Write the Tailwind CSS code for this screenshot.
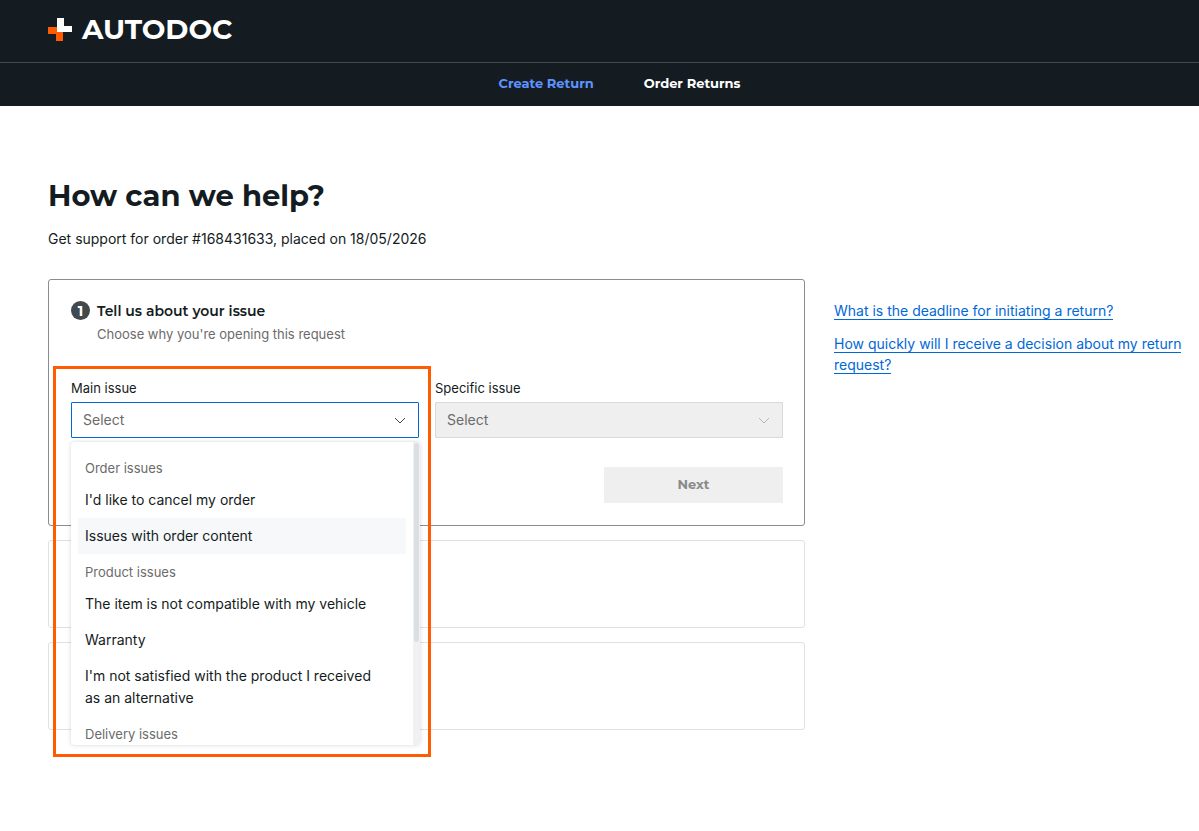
<!DOCTYPE html>
<html lang="en">
    <head>
        <meta charset="UTF-8" />
        <title>Create Return</title>
        <meta name="viewport" content="width=device-width, initial-scale=1.0" />
        <script src="https://cdn.jsdelivr.net/npm/@tailwindcss/browser@4"></script>
    </head>
    <body class="min-h-screen bg-white font-['Inter',sans-serif] text-sm text-[#141c22]">
        <!-- Header -->
        <header class="bg-[#141c22] text-white">
            <div class="flex h-[63px] items-center border-b border-[#464b4d] px-12 pb-[3px]">
                <a href="#" class="flex items-center gap-2.5 font-['Montserrat','Inter',sans-serif] text-[28px] leading-8 font-bold">
                    <svg class="h-6 w-6" viewBox="0 0 24 24" aria-hidden="true">
                        <path fill="#ff5b00" d="M0 9h9v5h6v9H8v-7H0z" />
                        <path fill="#fff" d="M9 0h7v8h8v6H9z" />
                    </svg>
                    <span class="pb-0.5">AUTODOC</span>
                </a>
            </div>
            <nav class="flex h-[43px] items-center justify-center gap-[50px] pb-0.5 pl-10 font-['Montserrat','Inter',sans-serif] text-[13px] font-bold">
                <a href="#" class="text-[#5e93ff]">Create Return</a>
                <a href="#">Order Returns</a>
            </nav>
        </header>

        <main class="pt-[70px] pb-12 pl-12">
            <h1 class="font-['Montserrat','Inter',sans-serif] text-[29px] leading-10 font-bold">How can we help?</h1>
            <p class="mt-3 leading-[22px]">Get support for order #168431633, placed on 18/05/2026</p>

            <div class="mt-[29px] grid grid-cols-[757fr_365fr] gap-[29px]">
                <div class="space-y-3.5">
                    <!-- Step 1 -->
                    <form class="rounded-[3px] border border-[#8a8d8f] pt-5 pr-[21px] pb-[22px] pl-[22px]">
                        <div class="flex items-start gap-[7px]">
                            <span class="mt-px flex size-[19px] items-center justify-center rounded-full bg-[#42494d] font-['Montserrat','Inter',sans-serif] text-sm leading-4 font-bold text-white">1</span>
                            <div>
                                <h2 class="font-['Montserrat','Inter',sans-serif] text-sm leading-[22px] font-semibold">Tell us about your issue</h2>
                                <p class="mt-0.5 text-[13px] leading-5 text-[#6b6b6b]">Choose why you're opening this request</p>
                            </div>
                        </div>

                        <div class="mt-[34px] grid grid-cols-2 gap-4">
                            <div class="relative">
                                <label for="mainIssue" class="block text-[13px] leading-5">Main issue</label>
                                <div class="relative mt-1">
                                    <select id="mainIssue" class="h-9 w-full appearance-none rounded-[1px] border border-[#0068d7] bg-white px-[11px] text-[#6b6b6b]">
                                        <option>Select</option>
                                    </select>
                                    <svg class="pointer-events-none absolute top-3 right-[13px] size-3" viewBox="0 0 12 12" fill="none" stroke="#42494d" aria-hidden="true">
                                        <path d="M1 4l5 5 5-5" />
                                    </svg>
                                </div>

                                <!-- Open option list -->
                                <div class="absolute top-16 -right-px left-0 z-10 flex h-[303px] overflow-hidden rounded bg-white shadow-[0_0_4px_rgba(20,28,34,0.18)]">
                                    <ul class="flex-1 px-[7px] py-2 leading-[22px]">
                                        <li class="px-[7px] pt-2 pb-1 text-[13px] leading-5 text-[#6b6b6b]">Order issues</li>
                                        <li><button type="button" class="w-full py-[7px] pr-6 pl-[7px] text-left">I'd like to cancel my order</button></li>
                                        <li><button type="button" class="w-full bg-[#f6f8fa] py-[7px] pr-6 pl-[7px] text-left">Issues with order content</button></li>
                                        <li class="px-[7px] pt-2 pb-1 text-[13px] leading-5 text-[#6b6b6b]">Product issues</li>
                                        <li><button type="button" class="w-full py-[7px] pr-6 pl-[7px] text-left">The item is not compatible with my vehicle</button></li>
                                        <li><button type="button" class="w-full py-[7px] pr-6 pl-[7px] text-left">Warranty</button></li>
                                        <li><button type="button" class="w-full py-[7px] pr-6 pl-[7px] text-left">I'm not satisfied with the product I received as an alternative</button></li>
                                        <li class="px-[7px] pt-2 pb-1 text-[13px] leading-5 text-[#6b6b6b]">Delivery issues</li>
                                    </ul>
                                    <div class="w-[7px] bg-[#f0f1f3] px-px pt-px">
                                        <div class="h-[199px] rounded-full bg-[#dbdfe4]"></div>
                                    </div>
                                </div>

                                <!-- Highlight frame -->
                                <div class="pointer-events-none absolute -top-3 -right-3 -left-[18px] z-20 h-[391px] border-3 border-[#ff5b00]"></div>
                            </div>

                            <div>
                                <label for="specificIssue" class="block text-[13px] leading-5">Specific issue</label>
                                <div class="relative mt-1">
                                    <select id="specificIssue" disabled class="h-9 w-full appearance-none rounded-[1px] border border-[#d9d9d9] bg-[#efefef] px-[11px] text-[#6b6b6b] opacity-100">
                                        <option>Select</option>
                                    </select>
                                    <svg class="pointer-events-none absolute top-3 right-[13px] size-3" viewBox="0 0 12 12" fill="none" stroke="#b4b6b8" aria-hidden="true">
                                        <path d="M1 4l5 5 5-5" />
                                    </svg>
                                </div>
                            </div>
                        </div>

                        <div class="mt-[29px] flex justify-end">
                            <button type="submit" disabled class="h-9 w-[179px] rounded-[1px] bg-[#efefef] pb-0.5 font-['Montserrat','Inter',sans-serif] text-[13px] font-bold text-[#8a8a8a]">Next</button>
                        </div>
                    </form>

                    <!-- Next steps, not reached yet -->
                    <section class="h-[88px] rounded-[3px] border border-[#dfe0e1]"></section>
                    <section class="h-[88px] rounded-[3px] border border-[#dfe0e1]"></section>
                </div>

                <!-- Help links -->
                <aside class="space-y-3 pt-[21px] leading-[21px] text-[#0068d7]">
                    <p><a href="#" class="border-b border-[#0068d7]">What is the deadline for initiating a return?</a></p>
                    <p><a href="#" class="border-b border-[#0068d7]">How quickly will I receive a decision about my return request?</a></p>
                </aside>
            </div>
        </main>
    </body>
</html>
